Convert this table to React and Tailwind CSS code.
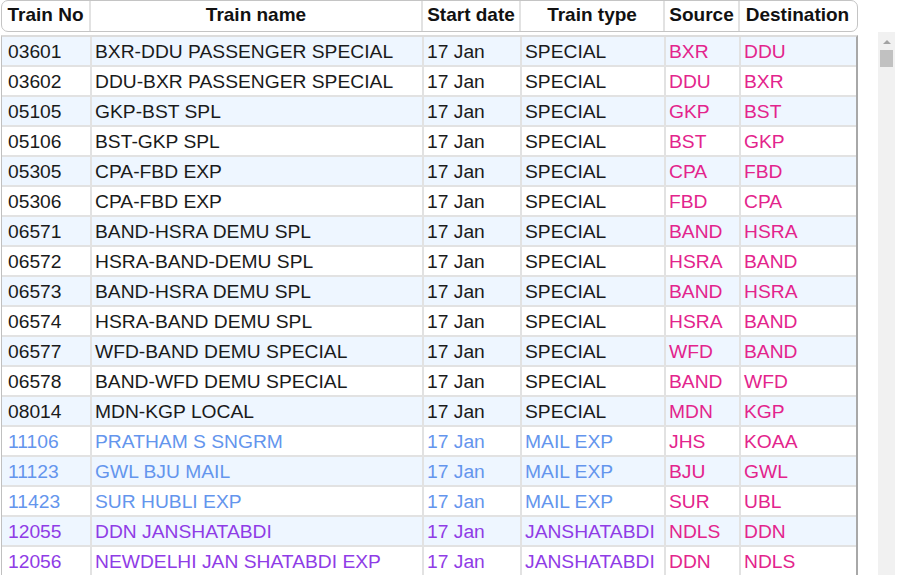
const cols = [
  { key: "no", label: "Train No", w: "w-[88px]", pad: "pl-[6px]" },
  { key: "name", label: "Train name", w: "w-[332px]", pad: "pl-[3px]" },
  { key: "date", label: "Start date", w: "w-[98px]", pad: "pl-[3px]" },
  { key: "type", label: "Train type", w: "w-[144px]", pad: "pl-[3px]" },
  { key: "src", label: "Source", w: "w-[75px]", pad: "pl-[3px]" },
  { key: "dst", label: "Destination", w: "w-[117px]", pad: "pl-[3px]" },
];

const typeColors = {
  SPECIAL: "text-[#1a1a1a]",
  "MAIL EXP": "text-[#6495ed]",
  JANSHATABDI: "text-[#8f3ce6]",
};

const trains = [
  ["03601", "BXR-DDU PASSENGER SPECIAL", "SPECIAL", "BXR", "DDU"],
  ["03602", "DDU-BXR PASSENGER SPECIAL", "SPECIAL", "DDU", "BXR"],
  ["05105", "GKP-BST SPL", "SPECIAL", "GKP", "BST"],
  ["05106", "BST-GKP SPL", "SPECIAL", "BST", "GKP"],
  ["05305", "CPA-FBD EXP", "SPECIAL", "CPA", "FBD"],
  ["05306", "CPA-FBD EXP", "SPECIAL", "FBD", "CPA"],
  ["06571", "BAND-HSRA DEMU SPL", "SPECIAL", "BAND", "HSRA"],
  ["06572", "HSRA-BAND-DEMU SPL", "SPECIAL", "HSRA", "BAND"],
  ["06573", "BAND-HSRA DEMU SPL", "SPECIAL", "BAND", "HSRA"],
  ["06574", "HSRA-BAND DEMU SPL", "SPECIAL", "HSRA", "BAND"],
  ["06577", "WFD-BAND DEMU SPECIAL", "SPECIAL", "WFD", "BAND"],
  ["06578", "BAND-WFD DEMU SPECIAL", "SPECIAL", "BAND", "WFD"],
  ["08014", "MDN-KGP LOCAL", "SPECIAL", "MDN", "KGP"],
  ["11106", "PRATHAM S SNGRM", "MAIL EXP", "JHS", "KOAA"],
  ["11123", "GWL BJU MAIL", "MAIL EXP", "BJU", "GWL"],
  ["11423", "SUR HUBLI EXP", "MAIL EXP", "SUR", "UBL"],
  ["12055", "DDN JANSHATABDI", "JANSHATABDI", "NDLS", "DDN"],
  ["12056", "NEWDELHI JAN SHATABDI EXP", "JANSHATABDI", "DDN", "NDLS"],
];

export default function App() {
  return (
    <div className="h-[575px] overflow-hidden bg-white font-['Liberation_Sans',Arial,sans-serif] text-[19px] leading-none">
      <div className="flex items-start pl-px">
        {/* TABLE */}
        <div className="w-[857px]">
          {/* HEADER */}
          <div className="flex h-8 rounded-[7px] border border-[#c4c4c4] font-bold text-[#111]">
            {cols.map((c, i) => (
              <div
                key={c.key}
                className={`${i === 0 ? "w-[87px]" : c.w} flex items-center justify-center pb-[3px] ${
                  i > 0 ? "border-l-2 border-[#e2e2e2]" : ""
                }`}
              >
                {c.label}
              </div>
            ))}
          </div>

          {/* BODY */}
          <div className="mt-[3px] border-t-2 border-l border-r-2 border-t-[#dcdcdc] border-l-[#c0c0c0] border-r-[#a8a8a8] text-[19.25px]">
            {trains.map(([no, name, type, src, dst], r) => {
              const tc = typeColors[type];
              const cells = [no, name, "17 Jan", type, src, dst];
              return (
                <div
                  key={no}
                  className={`flex h-[30px] border-b-2 border-[#e2e2e2] ${
                    r % 2 === 0 ? "bg-[#eef6ff]" : "bg-white"
                  }`}
                >
                  {cells.map((v, i) => (
                    <div
                      key={i}
                      className={`${cols[i].w} ${cols[i].pad} flex items-center whitespace-nowrap pt-[2px] ${
                        i > 0 ? "border-l-2 border-[#e2e2e2]" : ""
                      } ${i >= 4 ? "text-[#e3248c]" : tc}`}
                    >
                      {v}
                    </div>
                  ))}
                </div>
              );
            })}
          </div>
        </div>

        {/* SCROLLBAR */}
        <div className="ml-[20px] mt-[32px] flex h-[560px] w-[17px] flex-col items-center bg-[#f1f1f1]">
          <div className="mt-[8px] h-0 w-0 border-x-[4px] border-b-[4px] border-x-transparent border-b-[#a3a3a3]" />
          <div className="mt-[6px] h-[17px] w-[13px] bg-[#c1c1c1]" />
        </div>
      </div>
    </div>
  );
}
